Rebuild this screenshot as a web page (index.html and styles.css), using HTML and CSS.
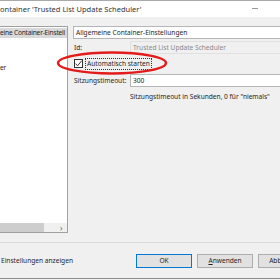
FILE: index.html
```html
<!DOCTYPE html>
<html lang="de">
<head>
    <meta charset="UTF-8">
    <title>Eigenschaften</title>
    <link rel="stylesheet" href="styles.css">
</head>
<body>

<div class="window">
    <div class="titlebar">
        <span class="title">ontainer 'Trusted List Update Scheduler'</span>
        <span class="min-btn"></span>
    </div>

    <div class="main">
        <div class="tree">
            <div class="tree-items">
                <div class="tree-item selected">eine Container-Einstell</div>
                <div class="tree-item sub">er</div>
            </div>
            <div class="hscroll">
                <div class="thumb"></div>
                <div class="arrow">&#8250;</div>
            </div>
        </div>

        <div class="content">
            <div class="header-box">Allgemeine Container-Einstellungen</div>

            <div class="row">
                <span class="label">Id:</span>
                <span class="field disabled">Trusted List Update Scheduler</span>
            </div>

            <div class="check-row">
                <span class="checkbox">
                    <svg width="9" height="9" viewBox="0 0 9 9"><path d="M1.5 4.6 L3.6 6.8 L7.6 1.8" fill="none" stroke="#333" stroke-width="1"/></svg>
                </span>
                <span class="check-label">Automatisch starten</span>
            </div>

            <div class="row timeout">
                <span class="label">Sitzungstimeout:</span>
                <span class="field">300</span>
            </div>

            <div class="hint">Sitzungstimeout in Sekunden, 0 für "niemals"</div>
        </div>
    </div>

    <div class="footer">
        <span class="show-all">Einstellungen anzeigen</span>
        <div class="buttons">
            <button class="btn default">OK</button>
            <button class="btn"><u>A</u>nwenden</button>
            <button class="btn">Abbrechen</button>
        </div>
    </div>

    <svg class="marker" width="120" height="30" viewBox="0 0 120 30">
        <ellipse cx="58" cy="13" rx="54" ry="10.5" fill="none" stroke="#e31b1b" stroke-width="2.4"/>
    </svg>
</div>

</body>
</html>
```

FILE: styles.css
```css
body {
    margin: 0;
    background: #f0f0f0;
    font-family: "Noto Sans", "Open Sans", sans-serif;
    font-size: 6.6px;
    color: #1e1e1e;
    overflow: hidden;
}
.window {
    position: relative;
    width: 280px;
    height: 280px;
    overflow: hidden;
}
.titlebar {
    height: 16px;
    background: #fff;
    border-top: 1px solid #a9a9a9;
    display: flex;
    align-items: center;
    justify-content: space-between;
    font-size: 7.5px;
    color: #333;
}
.min-btn {
    width: 6px;
    height: 1px;
    background: #999;
    margin-right: 22px;
    margin-top: -1px;
}
.main {
    display: flex;
    padding-top: 9px;
    height: 207px;
}
.tree {
    width: 67px;
    background: #fff;
    border: 1px solid #a0a0a0;
    border-left: none;
    display: flex;
    flex-direction: column;
    flex-shrink: 0;
}
.tree-items {
    flex: 1;
    padding-top: 1px;
    overflow: hidden;
}
.tree-item {
    height: 10px;
    line-height: 10px;
    white-space: nowrap;
    overflow: hidden;
    letter-spacing: -0.2px;
}
.tree-item.selected {
    background: #d9d9d9;
}
.tree-item.sub {
    margin-top: 25px;
}
.hscroll {
    height: 9px;
    background: #f0f0f0;
    display: flex;
}
.thumb {
    width: 44px;
    background: #cdcdcd;
}
.arrow {
    margin-left: auto;
    width: 7px;
    line-height: 9px;
    color: #606060;
    font-size: 8px;
}
.content {
    flex: 1;
    margin-left: 5px;
    display: flex;
    flex-direction: column;
}
.header-box {
    height: 11px;
    line-height: 11px;
    background: #fff;
    border: 1px solid #b5b5b5;
    border-right: none;
    padding-left: 2px;
}
.row {
    display: flex;
    align-items: center;
    height: 13px;
    margin-top: 2px;
}
.row.timeout {
    margin-top: 5px;
}
.label {
    width: 56px;
    padding-left: 1px;
}
.field {
    flex: 1;
    height: 11px;
    line-height: 11px;
    background: #fff;
    border: 1px solid #b5b5b5;
    border-right: none;
    padding-left: 2px;
}
.field.disabled {
    background: #f0f0f0;
    border-color: #e0e0e0;
    color: #8a8a8a;
}
.check-row {
    display: flex;
    align-items: center;
    height: 11px;
    margin-top: 4px;
}
.checkbox {
    width: 9px;
    height: 9px;
    border: 1px solid #333;
    background: #fff;
    box-sizing: border-box;
    display: flex;
    margin-left: 1px;
}
.checkbox svg {
    margin: -1px;
}
.check-label {
    margin-left: 2px;
    padding: 0 1px;
    line-height: 10px;
    border: 1px dotted #333;
}
.hint {
    margin-top: 5px;
    padding-left: 57px;
}
.footer {
    margin-top: 9px;
    border-top: 1px solid #dadada;
    border-bottom: 1px solid #8c8c8c;
    height: 35px;
    display: flex;
    align-items: center;
    justify-content: space-between;
}
.show-all {
    padding-left: 1px;
}
.buttons {
    display: flex;
    gap: 5px;
    margin-right: -34px;
}
.btn {
    width: 56px;
    height: 14px;
    padding: 0;
    background: #e1e1e1;
    border: 1px solid #adadad;
    font-family: inherit;
    font-size: 6.6px;
    color: #1e1e1e;
}
.btn.default {
    border-color: #0078d7;
}
.marker {
    position: absolute;
    left: 54px;
    top: 50px;
}
```
